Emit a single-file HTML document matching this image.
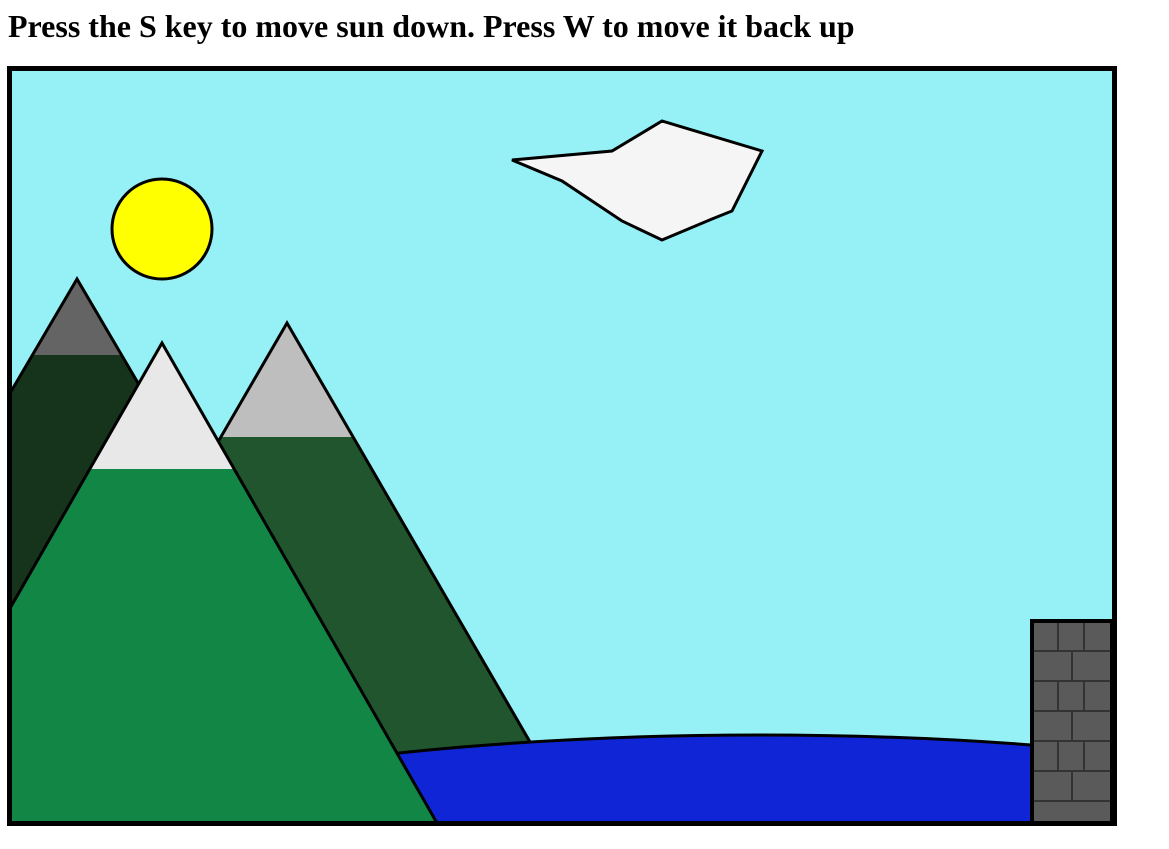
<!DOCTYPE html>
<html><head><style>
html,body{margin:0;padding:0;background:#fff;width:1169px;height:849px;overflow:hidden;position:relative}
h2{position:absolute;left:8px;top:8px;margin:0;font:bold 32px/36px "Liberation Serif",serif;white-space:nowrap;color:#000}
svg{position:absolute;left:0;top:0;display:block}
</style></head><body>
<h2>Press the S key to move sun down. Press W to move it back up</h2>
<svg width="1169" height="849" viewBox="0 0 1169 849">
<defs><clipPath id="c"><rect x="12" y="71" width="1100" height="750"/></clipPath></defs>
<rect x="12" y="71" width="1100" height="750" fill="#96f1f6"/>
<g clip-path="url(#c)" stroke-linejoin="miter">
 <polygon points="77,279 -242,823 396,823" fill="#16341c"/>
 <polygon points="77,279 33,355 121,355" fill="#646464"/>
 <polygon points="77,279 -242,823 396,823" fill="none" stroke="#000" stroke-width="3"/>
 <polygon points="287,323 -3,823 577,823" fill="#21552d"/>
 <polygon points="287,323 221,437 353,437" fill="#bebebe"/>
 <polygon points="287,323 -3,823 577,823" fill="none" stroke="#000" stroke-width="3"/>
 <ellipse cx="760" cy="903" rx="800" ry="168" fill="#1026d6" stroke="#000" stroke-width="3"/>
 <polygon points="162,343 -113,823 437,823" fill="#118645"/>
 <polygon points="162,343 90,469 234,469" fill="#e8e8e8"/>
 <polygon points="162,343 -113,823 437,823" fill="none" stroke="#000" stroke-width="3"/>
 <rect x="1032" y="621" width="80" height="202" fill="#5a5a5a" stroke="#000" stroke-width="4"/>
 <g stroke="#333" stroke-width="2">
  <line x1="1034" y1="651" x2="1110" y2="651"/><line x1="1034" y1="681" x2="1110" y2="681"/>
  <line x1="1034" y1="711" x2="1110" y2="711"/><line x1="1034" y1="741" x2="1110" y2="741"/>
  <line x1="1034" y1="771" x2="1110" y2="771"/><line x1="1034" y1="801" x2="1110" y2="801"/>
  <line x1="1058" y1="623" x2="1058" y2="651"/><line x1="1084" y1="623" x2="1084" y2="651"/>
  <line x1="1072" y1="651" x2="1072" y2="681"/>
  <line x1="1058" y1="681" x2="1058" y2="711"/><line x1="1084" y1="681" x2="1084" y2="711"/>
  <line x1="1072" y1="711" x2="1072" y2="741"/>
  <line x1="1058" y1="741" x2="1058" y2="771"/><line x1="1084" y1="741" x2="1084" y2="771"/>
  <line x1="1072" y1="771" x2="1072" y2="801"/>
 </g>
 <circle cx="162" cy="229" r="50" fill="#ff0" stroke="#000" stroke-width="3"/>
 <polygon points="512,160 612,151 662,121 762,151 732,211 712,219 662,240 622,221 562,181" fill="#f5f5f5" stroke="#000" stroke-width="3"/>
</g>
<rect x="9.5" y="68.5" width="1105" height="755" fill="none" stroke="#000" stroke-width="5"/>
</svg>
</body></html>
